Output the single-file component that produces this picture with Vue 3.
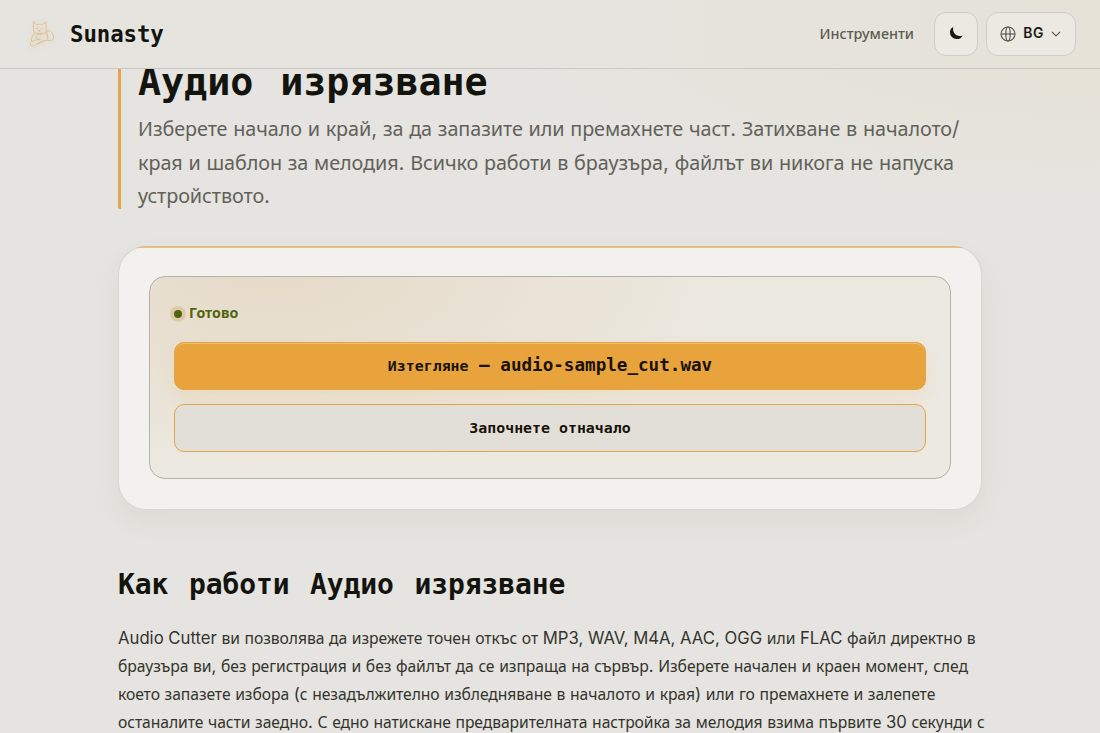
<script setup>
// Splits a string into Cyrillic and Latin runs so each script gets its own family.
const runs = (text) =>
  (text.match(/[\u0400-\u04ff]+|[^\u0400-\u04ff]+/g) || []).map((t) => ({
    t,
    cyr: /[\u0400-\u04ff]/.test(t),
  }))

const lead = [
  'Изберете начало и край, за да запазите или премахнете част. Затихване в началото/',
  'края и шаблон за мелодия. Всичко работи в браузъра, файлът ви никога не напуска',
  'устройството.',
]

const body = [
  'Audio Cutter ви позволява да изрежете точен откъс от MP3, WAV, M4A, AAC, OGG или FLAC файл директно в',
  'браузъра ви, без регистрация и без файлът да се изпраща на сървър. Изберете начален и краен момент, след',
  'което запазете избора (с незадължително избледняване в началото и края) или го премахнете и залепете',
  'останалите части заедно. С едно натискане предварителната настройка за мелодия взима първите 30 секунди с',
]
</script>

<template>
  <div class="page" lang="bg">
    <header class="bar">
      <div class="brand">
        <svg class="cat" viewBox="0 0 28 30" fill="none" stroke="#e8a33d" stroke-width="1" stroke-linecap="round" stroke-linejoin="round">
          <path d="M5.500 9.500 5.200 3c1.600.5 2.700 1.500 3.600 2.700 1.900-.5 3.900-.5 5.600 0 .9-1.300 2-2.200 3.600-2.700l.1 7c.5 3.300-2.200 5.600-6.300 5.600S5 13.300 5.500 9.500Z" />
          <path d="M8.500 9.500h1.200M13.300 9.500h1.200M10.400 11.500h2l-1 1.200-1-1.200M9 14c1.500.8 3.500.8 5 0" />
          <path d="M6 14.500c-2 3-3 5.500-2.500 8-1.500 1.300-1.500 3.600.2 4.200 1.500.5 3.400-.3 5-1.100l9.800-4.600M17.500 13.500c1.500 1.500 2.300 3.500 2 5.500M7.500 17c.5 2 1.500 3 4.500 3.500M4 22.500c2.500-1.800 5-2 8-2" />
          <path d="M18.500 12.500c2-.9 4.300-1 5.300.8 1.600 2.700 2.500 6.200 1 7.200-1.700 1.200-4 .9-6.400.8-3.100.2-6 1.900-9.500 3.500M18.500 12.500l1.500 7" />
        </svg>
        <span class="name">Sunasty</span>
      </div>
      <nav class="nav">
        <a class="link">Инструменти</a>
        <button class="pill moon" aria-label="Тема">
          <svg width="18" height="18" viewBox="0 0 18 18" fill="#1a1a14"><path d="M6.300 2C3.800 3.200 3 5.200 3 7.300c0 3.800 3 6.700 6.700 6.700 3 0 5-1.200 5.900-3.600-3.300 1.200-6.400.4-8.200-2.100C6.100 6.500 5.800 4.200 6.300 2Z" /></svg>
        </button>
        <button class="pill lang">
          <svg width="16" height="16" viewBox="0 0 16 16" fill="none" stroke="#55554b" stroke-width="1.150"><circle cx="8" cy="8" r="7" /><ellipse cx="8" cy="8" rx="2.200" ry="7" /><path d="M1 8h14" /></svg>
          <span class="code">BG</span>
          <svg width="10" height="10" viewBox="0 0 10 10" fill="none" stroke="#55554b" stroke-width="1.100" stroke-linecap="round" stroke-linejoin="round"><path d="m1.200 3.200 3.800 3.700 3.800-3.700" /></svg>
        </button>
      </nav>
    </header>

    <main class="main">
      <section class="hero">
        <h1>Аудио изрязване</h1>
        <p class="lead">
          <span v-for="(line, i) in lead" :key="i" class="line"><span v-for="(r, j) in runs(line)" :key="j" :class="{ cyr: r.cyr }">{{ r.t }}</span></span>
        </p>
      </section>

      <section class="card">
        <div class="panel">
          <div class="status"><i class="dot"></i>Готово</div>
          <button class="btn primary"><span class="small">Изтегляне</span><span class="file"> — audio-sample_cut.wav</span></button>
          <button class="btn secondary"><span class="small">Започнете отначало</span></button>
        </div>
      </section>

      <h2>Как работи Аудио изрязване</h2>
      <p class="text">
        <span v-for="(line, i) in body" :key="i" class="line"><span v-for="(r, j) in runs(line)" :key="j" :class="{ cyr: r.cyr }">{{ r.t }}</span></span>
      </p>
    </main>
  </div>
</template>

<style>
body { background: #e5e4e0; overflow: hidden; }
</style>

<style scoped>
.page {
  box-sizing: border-box;
  width: 1100px;
  height: 733px;
  overflow: hidden;
  color: #14140f;
  font-family: Inter, "Noto Sans", sans-serif;
  background: radial-gradient(ellipse 600px 210px at 1090px 0, rgba(232, 222, 200, .55), rgba(232, 222, 200, 0)), #e5e4e0;
}
.bar {
  position: relative;
  z-index: 2;
  box-sizing: border-box;
  height: 69px;
  padding: 0 24px 1px 28px;
  display: flex;
  align-items: center;
  justify-content: space-between;
  border-bottom: 1px solid #c8c7c1;
  background: linear-gradient(90deg, #e5e4df 0%, #e5e4df 45%, #e6e2d8 100%);
}
.brand { display: flex; align-items: center; gap: 14px; }
.cat { width: 28px; height: 30px; opacity: .55; filter: drop-shadow(0 2px 4px rgba(90, 70, 30, .2)); }
.name { padding-top: 1px; font: 700 22.400px/1 "DejaVu Sans Mono", monospace; letter-spacing: -.1px; }
.nav { display: flex; align-items: center; gap: 8px; }
.link { font: 500 14.400px/1 "Noto Sans", sans-serif; color: #5d5c53; margin-right: 12px; padding-top: 2px; }
.pill {
  box-sizing: border-box;
  height: 44px;
  padding: 0;
  display: flex;
  align-items: center;
  justify-content: center;
  color: #1a1a14;
  border: 1px solid #cfcdc5;
  border-radius: 12px;
  background: #ebe9e2;
}
.moon { width: 44px; }
.lang { width: 90px; padding-right: 1px; gap: 7.500px; font: 600 13.900px/1 Inter, sans-serif; letter-spacing: .5px; }
.code { padding-top: 1px; }
.main { width: 864px; margin: -20px auto 0; }
.hero { box-sizing: border-box; height: 160px; border-left: 3px solid #e3a545; border-radius: 0 0 2px 2px; padding-left: 17px; }
h1, h2 { margin: 0; font-family: "DejaVu Sans Mono", monospace; font-weight: 700; white-space: nowrap; }
h1 { padding-top: 10px; font-size: 38.400px; line-height: 46px; word-spacing: 4px; letter-spacing: -.07px; }
.lead { margin: 7px 0 0; font-size: 20.500px; line-height: 33.600px; color: #626159; }
.line { display: block; white-space: pre; }
.lead .line { height: 33.600px; }
.text .line { height: 28px; }
.cyr { font-family: "Noto Sans", sans-serif; line-height: 1; }
.lead .cyr { font-size: 19.800px; letter-spacing: -.07px; }
.text .cyr { font-size: 15.700px; letter-spacing: -.08px; }
.card {
  box-sizing: border-box;
  height: 264px;
  margin-top: 37px;
  padding: 29px 30px;
  border: 1px solid rgba(190, 189, 180, .5);
  border-radius: 28px;
  background: linear-gradient(#f0bd74, #f0c079) 0 0 / 100% 2px no-repeat border-box, #f2f1ed border-box;
  box-shadow: 0 12px 28px rgba(60, 60, 40, .06);
}
.panel {
  box-sizing: border-box;
  height: 203px;
  padding: 24px;
  border: 1px solid #b3b2a9;
  border-radius: 16px;
  background: radial-gradient(ellipse 60% 100% at 15% 0, rgba(222, 198, 165, .42), rgba(222, 205, 170, 0)), #ece9e1;
}
.status { display: flex; align-items: center; gap: 6px; height: 25px; font: 700 14.200px/1 "Noto Sans", sans-serif; color: #53640f; }
.dot { width: 8px; height: 8px; margin-right: 1px; border-radius: 50%; background: #53640f; box-shadow: 0 0 0 4px rgba(205, 175, 120, .4); }
.btn {
  box-sizing: border-box;
  width: 100%;
  height: 48px;
  padding: 0;
  display: flex;
  align-items: center;
  justify-content: center;
  border: 1px solid #dfa648;
  border-radius: 10px;
  color: #191207;
  font: 700 17.600px/1 "DejaVu Sans Mono", monospace;
}
.small { font-size: 14.900px; }
.file { white-space: pre; }
.primary { margin-top: 16px; background: #e8a33d; box-shadow: inset 0 1px rgba(255, 230, 180, .4), 0 8px 18px rgba(232, 163, 61, .14); }
.secondary { margin-top: 14px; background: #e2dfd8; }
h2 { margin-top: 57px; font-size: 28px; line-height: 36px; word-spacing: 4px; letter-spacing: -.12px; }
.text { margin: 21px 0 0; font-size: 16.700px; line-height: 28px; color: #34342d; }
</style>
